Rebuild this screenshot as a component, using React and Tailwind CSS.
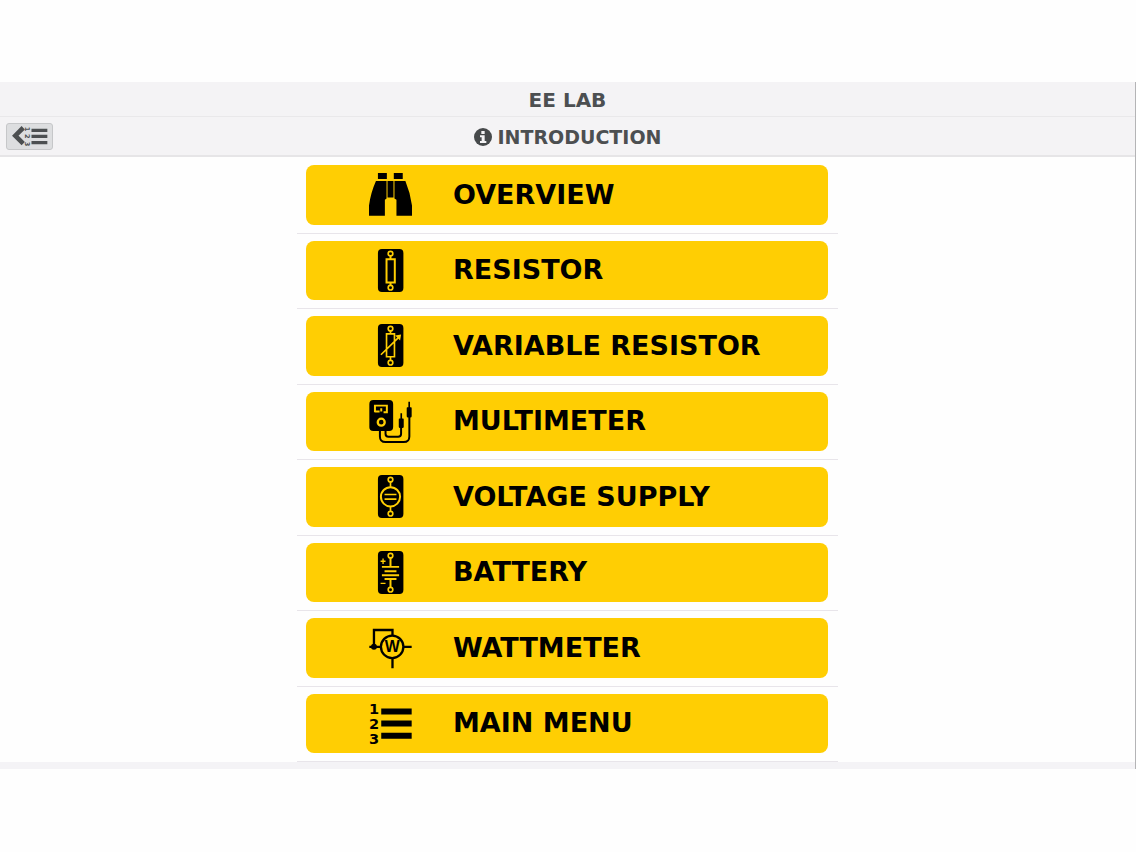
import React from "react";

const YELLOW = "#ffce03";

function Binoculars() {
  return (
    <svg viewBox="78 17 130 130" className="size-[43px]" aria-hidden="true">
      <path d="M105 17h27v18h-27zM153 17h27v18h-27zM134 41h18v50h-18zM99 41h32v53l-5 4v48H78v-31q5-38 21-74zM155 41h33q15 36 20 74v31h-47V98l-6-4z" />
    </svg>
  );
}

function Card({ children }) {
  return (
    <svg viewBox="27 25 130 130" className="size-[43px]" aria-hidden="true">
      <rect x="54" y="25" width="77" height="130" rx="12" />
      <g fill="none" stroke={YELLOW} strokeWidth="5">
        <circle cx="92" cy="39" r="7" />
        <circle cx="92" cy="142" r="7" />
        {children}
      </g>
    </svg>
  );
}

function Resistor() {
  return (
    <Card>
      <path d="M92 46v10M92 126v10M80 56h25v70H80z" strokeWidth="6" />
    </Card>
  );
}

function VariableResistor() {
  return (
    <Card>
      <path d="M92 46v9M92 124v12M80 55h24v69H80zM63 118l53-52" />
      <path d="M106 60l18-3-3 18z" fill={YELLOW} stroke="none" />
    </Card>
  );
}

function VoltageSupply() {
  return (
    <Card>
      <path d="M92 46v16M92 120v16M74 84h36M74 98h36" />
      <circle cx="92" cy="91" r="29" strokeWidth="6" />
    </Card>
  );
}

function Battery() {
  return (
    <Card>
      <path d="M92 46v27M92 111v25M66 73h52M74 86h36M66 98h52M74 110h36" strokeWidth="6" />
      <path d="M62 56h15M69.500 48v16M62 123h15" strokeWidth="4" />
    </Card>
  );
}

function Multimeter() {
  return (
    <svg viewBox="27 22 130 130" className="size-[43px]" aria-hidden="true">
      <rect x="28" y="22" width="72" height="94" rx="12" />
      <path d="M45 59V39h36v20h-10M45 57h14M64 47v10" fill="none" stroke={YELLOW} strokeWidth="6" />
      <circle cx="64" cy="89" r="10.500" fill="none" stroke={YELLOW} strokeWidth="7" />
      <g fill="none" stroke="#000" strokeWidth="6">
        <path d="M60 112v20q0 17 17 17h55q17 0 17-17V66" />
        <path d="M77 112v12q0 9 9 9h29q9 0 9-9v-20" />
      </g>
      <path d="M146 27h5v17h3q2 0 2 3v24q0 4-4 4h-7q-4 0-4-4V47q0-3 2-3h3zM122 62h5v16h3q2 0 2 3v22q0 4-4 4h-7q-4 0-4-4V81q0-3 2-3h3z" />
    </svg>
  );
}

function Wattmeter() {
  return (
    <svg viewBox="27 24 130 130" className="size-[43px]" aria-hidden="true">
      <g fill="none" stroke="#000" strokeWidth="7">
        <circle cx="97" cy="87" r="34" />
        <path d="M42 87V36h56v17M28 87h35M131 87h25M98 121v31" />
      </g>
      <circle cx="42" cy="87" r="9" />
      <text x="97" y="104" textAnchor="middle" fontSize="48" fontWeight="700" fontFamily="Liberation Sans, sans-serif">
        W
      </text>
    </svg>
  );
}

function NumberedList() {
  return (
    <svg viewBox="27 28 130 130" className="size-[43px] overflow-visible" aria-hidden="true">
      <g fontSize="44" fontWeight="700" fontFamily="DejaVu Sans, sans-serif" textAnchor="middle">
        <text x="42" y="64">1</text>
        <text x="42" y="110">2</text>
        <text x="42" y="156">3</text>
      </g>
      <path d="M64 48h92v18H64zM64 84h92v18H64zM64 121h92v18H64z" />
    </svg>
  );
}

function BackToList() {
  return (
    <svg viewBox="36 165 112 72" className="h-6 w-[37px]" fill="#4c4f51" aria-hidden="true">
      <path d="M73 173L49 197l24 24" fill="none" stroke="#4c4f51" strokeWidth="14" />
      <g fontSize="20" fontWeight="700" fontFamily="DejaVu Sans, sans-serif" textAnchor="middle">
        <text transform="translate(79 177) rotate(90)">1</text>
        <text transform="translate(79 199) rotate(90)">2</text>
        <text transform="translate(79 222) rotate(90)">3</text>
      </g>
      <path d="M98 176h48v10H98zM98 194h48v10H98zM98 213h48v10H98z" />
    </svg>
  );
}

function InfoIcon() {
  return (
    <svg viewBox="0 0 54 54" className="size-[18px]" aria-hidden="true">
      <circle cx="27" cy="27" r="27" fill="#46494b" />
      <path d="M22 9h10v9H22zM18 22h14v17h5v6H18v-6h5V28h-5z" fill="#f4f3f5" />
    </svg>
  );
}

const items = [
  { label: "OVERVIEW", Icon: Binoculars },
  { label: "RESISTOR", Icon: Resistor },
  { label: "VARIABLE RESISTOR", Icon: VariableResistor },
  { label: "MULTIMETER", Icon: Multimeter },
  { label: "VOLTAGE SUPPLY", Icon: VoltageSupply },
  { label: "BATTERY", Icon: Battery },
  { label: "WATTMETER", Icon: Wattmeter },
  { label: "MAIN MENU", Icon: NumberedList },
];

export default function App() {
  return (
    <div className="min-h-screen bg-[#fefefe] py-[82px] font-['DejaVu_Sans',sans-serif] font-bold">
      <div className="border-r border-[#b4b4b6]">
        <header className="bg-[#f4f3f5] leading-6 text-[#4c4f51]">
          <h1 className="border-b border-[#e9e8ea] pt-[6px] pb-[4px] text-center text-[20px]">EE LAB</h1>
          <div className="grid grid-cols-[1fr_auto_1fr] items-center border-b-2 border-[#e6e5e7] px-[6px] pt-[6px] pb-[5px] text-[19px]">
            <button
              type="button"
              aria-label="Back to menu"
              className="flex h-[27px] w-[47px] items-center justify-center rounded-[3px] border border-[#c6c7c9] bg-[#dddee0]"
            >
              <BackToList />
            </button>
            <h2 className="flex items-center gap-[6px]">
              <InfoIcon />
              INTRODUCTION
            </h2>
          </div>
        </header>
        <main className="border-b-[7px] border-[#f4f3f6] pt-px">
          <ul className="mx-auto grid min-h-[604px] w-[541px] max-w-full auto-rows-fr">
            {items.map(({ label, Icon }) => (
              <li key={label} className="flex border-b border-[#e8e5ea] pt-[7px] pr-[10px] pb-[8px] pl-[9px]">
                <button
                  type="button"
                  className="flex w-full items-center gap-[41px] rounded-lg bg-[#ffce03] pl-[63px] text-left text-[27px] leading-8 text-black"
                >
                  <Icon />
                  <span>{label}</span>
                </button>
              </li>
            ))}
          </ul>
        </main>
      </div>
    </div>
  );
}
